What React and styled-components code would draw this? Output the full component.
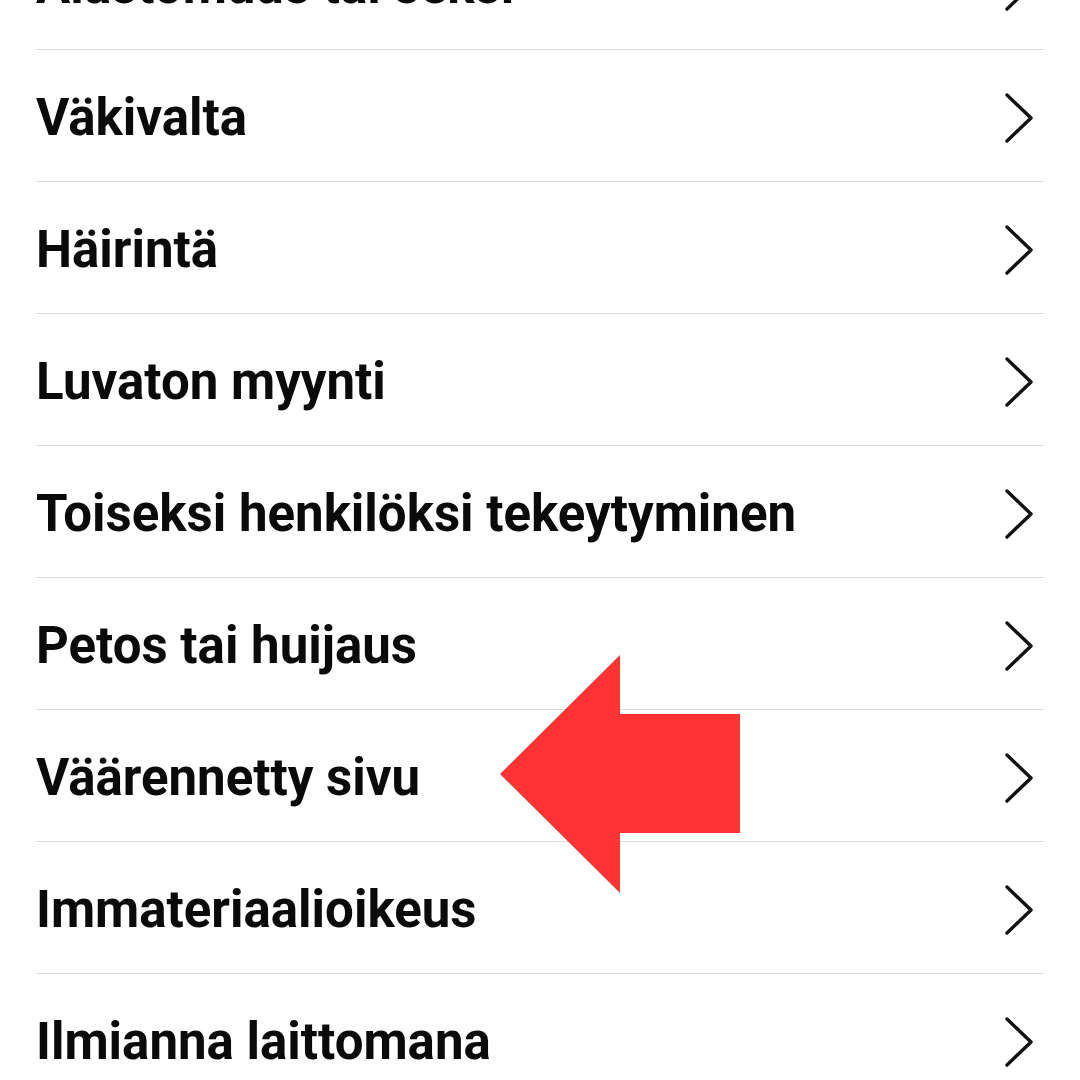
import React from "react";
import styled, { createGlobalStyle } from "styled-components";

const GlobalStyle = createGlobalStyle`
  html, body {
    margin: 0;
    padding: 0;
    background: #fff;
  }
  body {
    font-family: Roboto, "Liberation Sans", Arial, sans-serif;
  }
`;

const Screen = styled.div`
  position: relative;
  width: 1080px;
  height: 1080px;
  overflow: hidden;
  background: #fff;
`;

const List = styled.ul`
  list-style: none;
  margin: -82px 0 0 0;
  padding: 0 36px;
`;

const Row = styled.li`
  display: flex;
  align-items: center;
  justify-content: space-between;
  height: 132px;
  padding-top: 4px;
  box-sizing: border-box;
  border-bottom: 1px solid #dcdcdc;
`;

const Label = styled.span`
  font-size: 51px;
  font-weight: 700;
  line-height: 1;
  color: #0a0a0a;
`;

const Chevron = styled.svg`
  width: 30px;
  height: 52px;
  margin-right: 10px;
  flex-shrink: 0;
`;

const Arrow = styled.svg`
  position: absolute;
  left: 500px;
  top: 654px;
  width: 241px;
  height: 240px;
`;

const items = [
  "Alastomuus tai seksi",
  "Väkivalta",
  "Häirintä",
  "Luvaton myynti",
  "Toiseksi henkilöksi tekeytyminen",
  "Petos tai huijaus",
  "Väärennetty sivu",
  "Immateriaalioikeus",
  "Ilmianna laittomana",
];

const ChevronIcon = () => (
  <Chevron viewBox="0 0 30 52">
    <polyline
      points="3,3 27,26 3,49"
      fill="none"
      stroke="#111"
      strokeWidth="3.4"
      strokeLinecap="round"
      strokeLinejoin="round"
    />
  </Chevron>
);

export default function App() {
  return (
    <>
      <GlobalStyle />
      <Screen>
        <List>
          {items.map((item) => (
            <Row key={item}>
              <Label>{item}</Label>
              <ChevronIcon />
            </Row>
          ))}
        </List>
        <Arrow viewBox="0 0 241 240">
          <polygon
            points="0,120 120,1 120,60 240,60 240,179 120,179 120,239"
            fill="#ff3333"
          />
        </Arrow>
      </Screen>
    </>
  );
}
